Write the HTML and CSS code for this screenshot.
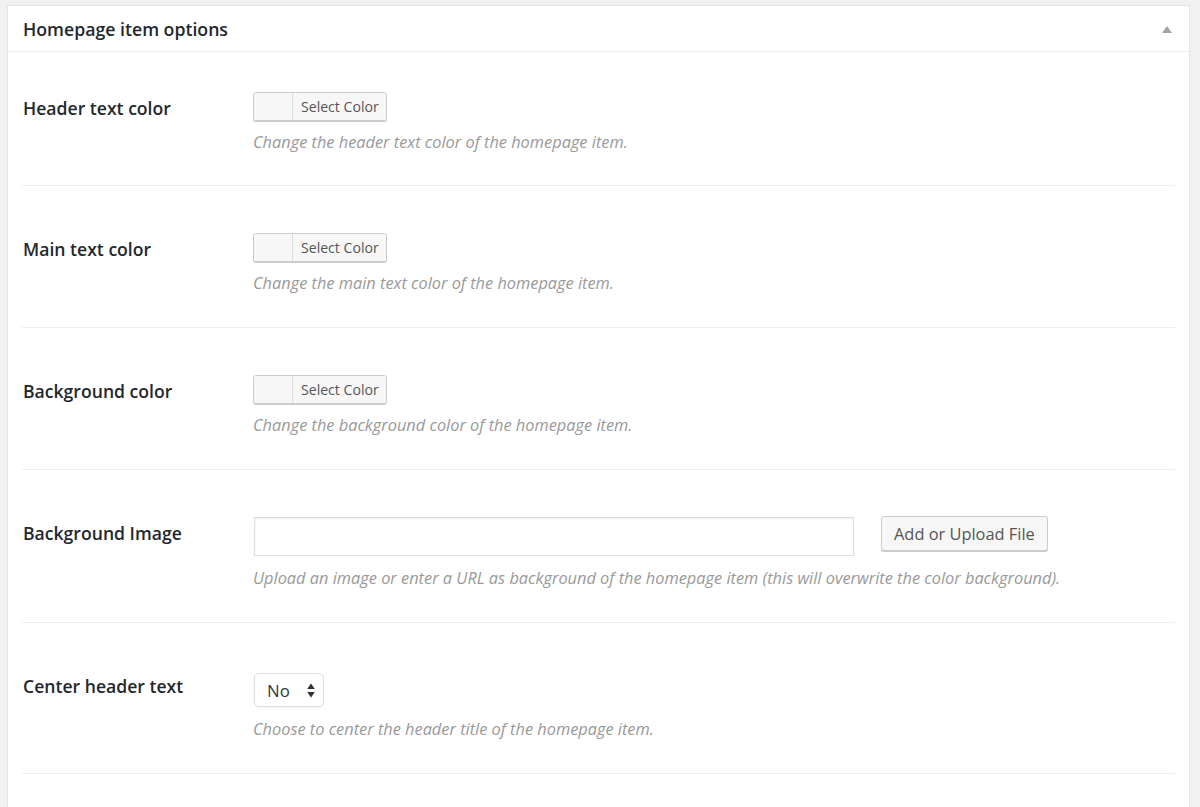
FILE: index.html
```html
<!DOCTYPE html>
<html lang="en">
<head>
<meta charset="utf-8">
<title>Homepage item options</title>
<link rel="stylesheet" href="styles.css">
</head>
<body>
<div class="postbox">
  <div class="hndle">
    <h2 class="title">Homepage item options</h2>
    <span class="toggle" aria-hidden="true"></span>
  </div>
  <div class="inside">
    <div class="row first">
      <div class="label">Header text color</div>
      <div class="field color">
        <button class="color-btn"><span class="swatch"></span><span class="btn-text">Select Color</span></button>
        <p class="desc">Change the header text color of the homepage item.</p>
      </div>
    </div>
    <div class="row">
      <div class="label">Main text color</div>
      <div class="field color">
        <button class="color-btn"><span class="swatch"></span><span class="btn-text">Select Color</span></button>
        <p class="desc">Change the main text color of the homepage item.</p>
      </div>
    </div>
    <div class="row">
      <div class="label">Background color</div>
      <div class="field color">
        <button class="color-btn"><span class="swatch"></span><span class="btn-text">Select Color</span></button>
        <p class="desc">Change the background color of the homepage item.</p>
      </div>
    </div>
    <div class="row">
      <div class="label">Background Image</div>
      <div class="field upload">
        <div class="upload-line">
          <input class="text-input" type="text" value="">
          <button class="upload-btn">Add or Upload File</button>
        </div>
        <p class="desc">Upload an image or enter a URL as background of the homepage item (this will overwrite the color background).</p>
      </div>
    </div>
    <div class="row">
      <div class="label">Center header text</div>
      <div class="field select">
        <div class="select-box"><span class="select-value">No</span>
          <svg class="select-arrows" width="8" height="15" viewBox="0 0 8 15"><path d="M4 0.5 L7.8 6 L0.2 6 Z M4 14.5 L7.8 9 L0.2 9 Z" fill="#333"/></svg>
        </div>
        <p class="desc">Choose to center the header title of the homepage item.</p>
      </div>
    </div>
  </div>
</div>
</body>
</html>
```
FILE: styles.css
```css
html, body {
  margin: 0;
  padding: 0;
  background: #f1f1f1;
  font-family: "Open Sans", "Noto Sans", sans-serif;
  color: #23282d;
}

.postbox {
  margin: 5px 0 0 7px;
  width: 1181px;
  min-height: 820px;
  background: #fff;
  border: 1px solid #e5e5e5;
  box-shadow: 0 1px 1px rgba(0, 0, 0, 0.04);
}

.hndle {
  height: 45px;
  border-bottom: 1px solid #eee;
  display: flex;
  align-items: center;
  justify-content: space-between;
  padding: 0 17px 0 15px;
}

.title {
  margin: 0;
  font-size: 17.7px;
  font-weight: 600;
  color: #23282d;
}

.toggle {
  width: 0;
  height: 0;
  border-left: 5px solid transparent;
  border-right: 5px solid transparent;
  border-bottom: 7px solid #a0a5aa;
  margin-top: 1px;
}

.inside {
  padding: 0 14px;
}

.row {
  display: grid;
  grid-template-columns: 231px 1fr;
  border-bottom: 1px solid #eee;
  padding-bottom: 33px;
}

.label {
  padding: 52px 0 0 1px;
  font-size: 17.6px;
  line-height: 22px;
  font-weight: 600;
  color: #23282d;
}

.row.first .label { padding-top: 45px; }

.field { padding-top: 47px; }
.row.first .field { padding-top: 40px; }
.row.first { padding-bottom: 32px; }
.field.select { padding-top: 50px; }

.desc {
  margin: 10px 0 0;
  font-size: 16.35px;
  line-height: 22px;
  font-style: italic;
  color: #999;
}

.field.upload .desc,
.field.select .desc { margin-top: 11px; }

.color-btn {
  display: flex;
  height: 29px;
  padding: 0;
  margin: 0;
  border: 1px solid #ccc;
  border-radius: 3px;
  background: #f7f7f7;
  box-shadow: 0 1px 0 #ccc;
  font-family: "Open Sans", "Noto Sans", sans-serif;
  overflow: hidden;
}

.swatch {
  width: 38px;
  height: 100%;
  background: #f7f7f7;
  border-right: 1px solid #ddd;
}

.btn-text {
  display: flex;
  align-items: center;
  padding: 0 7px 0 8px;
  font-size: 14.1px;
  color: #555;
  background: #f7f7f7;
  height: 100%;
}

.upload-line {
  display: flex;
  align-items: flex-start;
  gap: 27px;
}

.text-input {
  box-sizing: border-box;
  width: 600px;
  height: 39px;
  margin: 0 0 0 1px;
  border: 1px solid #ddd;
  box-shadow: inset 0 1px 2px rgba(0, 0, 0, 0.07);
  background: #fff;
  font-family: "Open Sans", "Noto Sans", sans-serif;
}

.upload-btn {
  box-sizing: border-box;
  height: 35px;
  margin-top: -1px;
  padding: 0 12px;
  border: 1px solid #ccc;
  border-radius: 3px;
  background: #f7f7f7;
  box-shadow: 0 1px 0 #ccc;
  font-family: "Open Sans", "Noto Sans", sans-serif;
  font-size: 16.4px;
  color: #555;
}

.select-box {
  box-sizing: border-box;
  display: flex;
  align-items: center;
  justify-content: space-between;
  width: 70px;
  height: 34px;
  margin-left: 1px;
  padding: 0 8px 0 12px;
  border: 1px solid #ddd;
  border-radius: 5px;
  background: #fff;
  box-shadow: 0 1px 1px rgba(0, 0, 0, 0.04);
}

.select-value {
  font-size: 16.8px;
  color: #32373c;
}

.select-arrows { display: block; }
```
